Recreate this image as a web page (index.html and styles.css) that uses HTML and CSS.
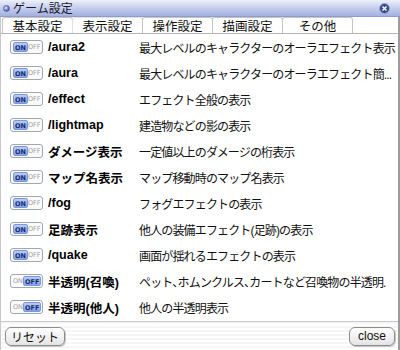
FILE: index.html
```html
<!DOCTYPE html>
<html lang="ja">
<head>
    <meta charset="UTF-8">
    <title>ゲーム設定</title>
    <link rel="stylesheet" href="styles.css">
</head>
<body>
    <div class="window">
        <!-- タイトルバー -->
        <div class="title-bar">
            <span class="title-dot"></span>
            <span class="title-text">ゲーム設定</span>
            <span class="title-close">
                <svg width="11" height="11" viewBox="0 0 11 11">
                    <circle cx="5.5" cy="5.5" r="5" fill="#3b4c8c" stroke="#9aa6d6" stroke-width="1"/>
                    <path d="M3.5 3.5 L7.5 7.5 M7.5 3.5 L3.5 7.5" stroke="#fff" stroke-width="1.4"/>
                </svg>
            </span>
        </div>

        <!-- タブ -->
        <div class="tabs">
            <div class="tab">基本設定</div>
            <div class="tab active">表示設定</div>
            <div class="tab">操作設定</div>
            <div class="tab">描画設定</div>
            <div class="tab">その他</div>
        </div>

        <!-- 設定一覧 -->
        <div class="options">
            <div class="row">
                <span class="toggle on"><b>ON</b><i>OFF</i></span>
                <span class="label">/aura2</span>
                <span class="desc">最大レベルのキャラクターのオーラエフェクト表示</span>
            </div>
            <div class="row">
                <span class="toggle on"><b>ON</b><i>OFF</i></span>
                <span class="label">/aura</span>
                <span class="desc">最大レベルのキャラクターのオーラエフェクト簡...</span>
            </div>
            <div class="row">
                <span class="toggle on"><b>ON</b><i>OFF</i></span>
                <span class="label">/effect</span>
                <span class="desc">エフェクト全般の表示</span>
            </div>
            <div class="row">
                <span class="toggle on"><b>ON</b><i>OFF</i></span>
                <span class="label">/lightmap</span>
                <span class="desc">建造物などの影の表示</span>
            </div>
            <div class="row">
                <span class="toggle on"><b>ON</b><i>OFF</i></span>
                <span class="label">ダメージ表示</span>
                <span class="desc">一定値以上のダメージの桁表示</span>
            </div>
            <div class="row">
                <span class="toggle on"><b>ON</b><i>OFF</i></span>
                <span class="label">マップ名表示</span>
                <span class="desc">マップ移動時のマップ名表示</span>
            </div>
            <div class="row">
                <span class="toggle on"><b>ON</b><i>OFF</i></span>
                <span class="label">/fog</span>
                <span class="desc">フォグエフェクトの表示</span>
            </div>
            <div class="row">
                <span class="toggle on"><b>ON</b><i>OFF</i></span>
                <span class="label">足跡表示</span>
                <span class="desc">他人の装備エフェクト(足跡)の表示</span>
            </div>
            <div class="row">
                <span class="toggle on"><b>ON</b><i>OFF</i></span>
                <span class="label">/quake</span>
                <span class="desc">画面が揺れるエフェクトの表示</span>
            </div>
            <div class="row">
                <span class="toggle off"><i>ON</i><b>OFF</b></span>
                <span class="label">半透明(召喚)</span>
                <span class="desc">ペット､ホムンクルス､カートなど召喚物の半透明.</span>
            </div>
            <div class="row">
                <span class="toggle off"><i>ON</i><b>OFF</b></span>
                <span class="label">半透明(他人)</span>
                <span class="desc">他人の半透明表示</span>
            </div>
        </div>

        <!-- フッター -->
        <div class="footer">
            <button class="btn">リセット</button>
            <button class="btn">close</button>
        </div>
    </div>
</body>
</html>
```

FILE: styles.css
```css
* {
    margin: 0;
    padding: 0;
    box-sizing: border-box;
}

body {
    font-family: "Noto Sans CJK JP", "Liberation Sans", sans-serif;
    background-color: #FFFFFF;
    width: 400px;
    height: 350px;
    overflow: hidden;
}

.window {
    width: 400px;
    height: 350px;
    display: flex;
    flex-direction: column;
    border-left: 1px solid #c8c8c8;
    border-right: 2px solid #9c9c9c;
    background: #fff;
}

.title-bar {
    height: 17px;
    display: flex;
    align-items: center;
    gap: 3px;
    padding: 0 4px 0 3px;
    background: linear-gradient(180deg, #eef1fa 0%, #c9d1ef 45%, #a3b0e0 100%);
    border-bottom: 1px solid #8e9bcf;
    margin-left: -1px;
    margin-right: -2px;
}

.title-dot {
    width: 7px;
    height: 7px;
    border-radius: 50%;
    background: radial-gradient(circle at 35% 35%, #e8ecfa, #4a5ca8 70%);
    border: 1px solid #5a6aa8;
}

.title-text {
    font-size: 12px;
    line-height: 16px;
    color: #1a1a2a;
    flex: 1;
}

.title-close {
    display: flex;
    margin-right: 6px;
}

.tabs {
    height: 17px;
    display: flex;
    padding-left: 1px;
    border-bottom: 1px solid #b4b4b4;
}

.tab {
    width: 71px;
    font-size: 12.5px;
    line-height: 16px;
    text-align: center;
    color: #111;
    border: 1px solid #c4c4c4;
    border-bottom: none;
    border-radius: 3px 3px 0 0;
    background: #fff;
}

.tab + .tab {
    margin-left: -1px;
}

.tab.active {
    border-color: #e0e0e0;
}

.options {
    flex: 1;
    display: flex;
    flex-direction: column;
}

.row {
    height: 26px;
    display: flex;
    align-items: center;
    padding-left: 9px;
}

.toggle {
    width: 33px;
    height: 14px;
    display: flex;
    align-items: center;
    justify-content: space-between;
    padding: 0 2px;
    border: 1px solid #a0a8b8;
    border-radius: 3px;
    background: #fbfbfb;
    font-family: "DejaVu Sans", sans-serif;
    font-size: 6.5px;
    font-weight: bold;
}

.toggle b {
    height: 10px;
    line-height: 10px;
    padding: 0 1px;
    color: #1c2a70;
    background: linear-gradient(180deg, #b8cdf6, #7fa3ea);
    border: 1px solid #7e96d8;
    border-radius: 2px;
}

.toggle i {
    font-style: normal;
    font-weight: normal;
    color: #a0a0a0;
}

.label {
    width: 91px;
    margin-left: 5px;
    font-family: "Liberation Sans", "Noto Sans CJK JP", sans-serif;
    font-size: 12.5px;
    font-weight: bold;
    color: #000;
    white-space: nowrap;
}

.desc {
    font-family: "Liberation Sans", "Noto Sans CJK JP", sans-serif;
    font-size: 12px;
    color: #111;
    white-space: nowrap;
    letter-spacing: -0.85px;
}

.footer {
    height: 29px;
    display: flex;
    align-items: center;
    justify-content: space-between;
    padding: 0 3px 0 4px;
    border-top: 1px solid #c8c8c8;
    background: repeating-linear-gradient(180deg, #f6f6f6 0px, #f6f6f6 2px, #ffffff 2px, #ffffff 4px);
}

.btn {
    height: 19px;
    padding: 0 5px;
    font-family: "Noto Sans CJK JP", "Liberation Sans", sans-serif;
    font-size: 12px;
    line-height: 15px;
    color: #111;
    border: 1px solid #8c8c8c;
    border-radius: 6px;
    background: linear-gradient(180deg, #ffffff, #e4e4e4);
    box-shadow: 1px 1px 0 #c8c8c8;
}

.btn:last-child {
    min-width: 46px;
    font-family: "Liberation Sans", sans-serif;
}
```
